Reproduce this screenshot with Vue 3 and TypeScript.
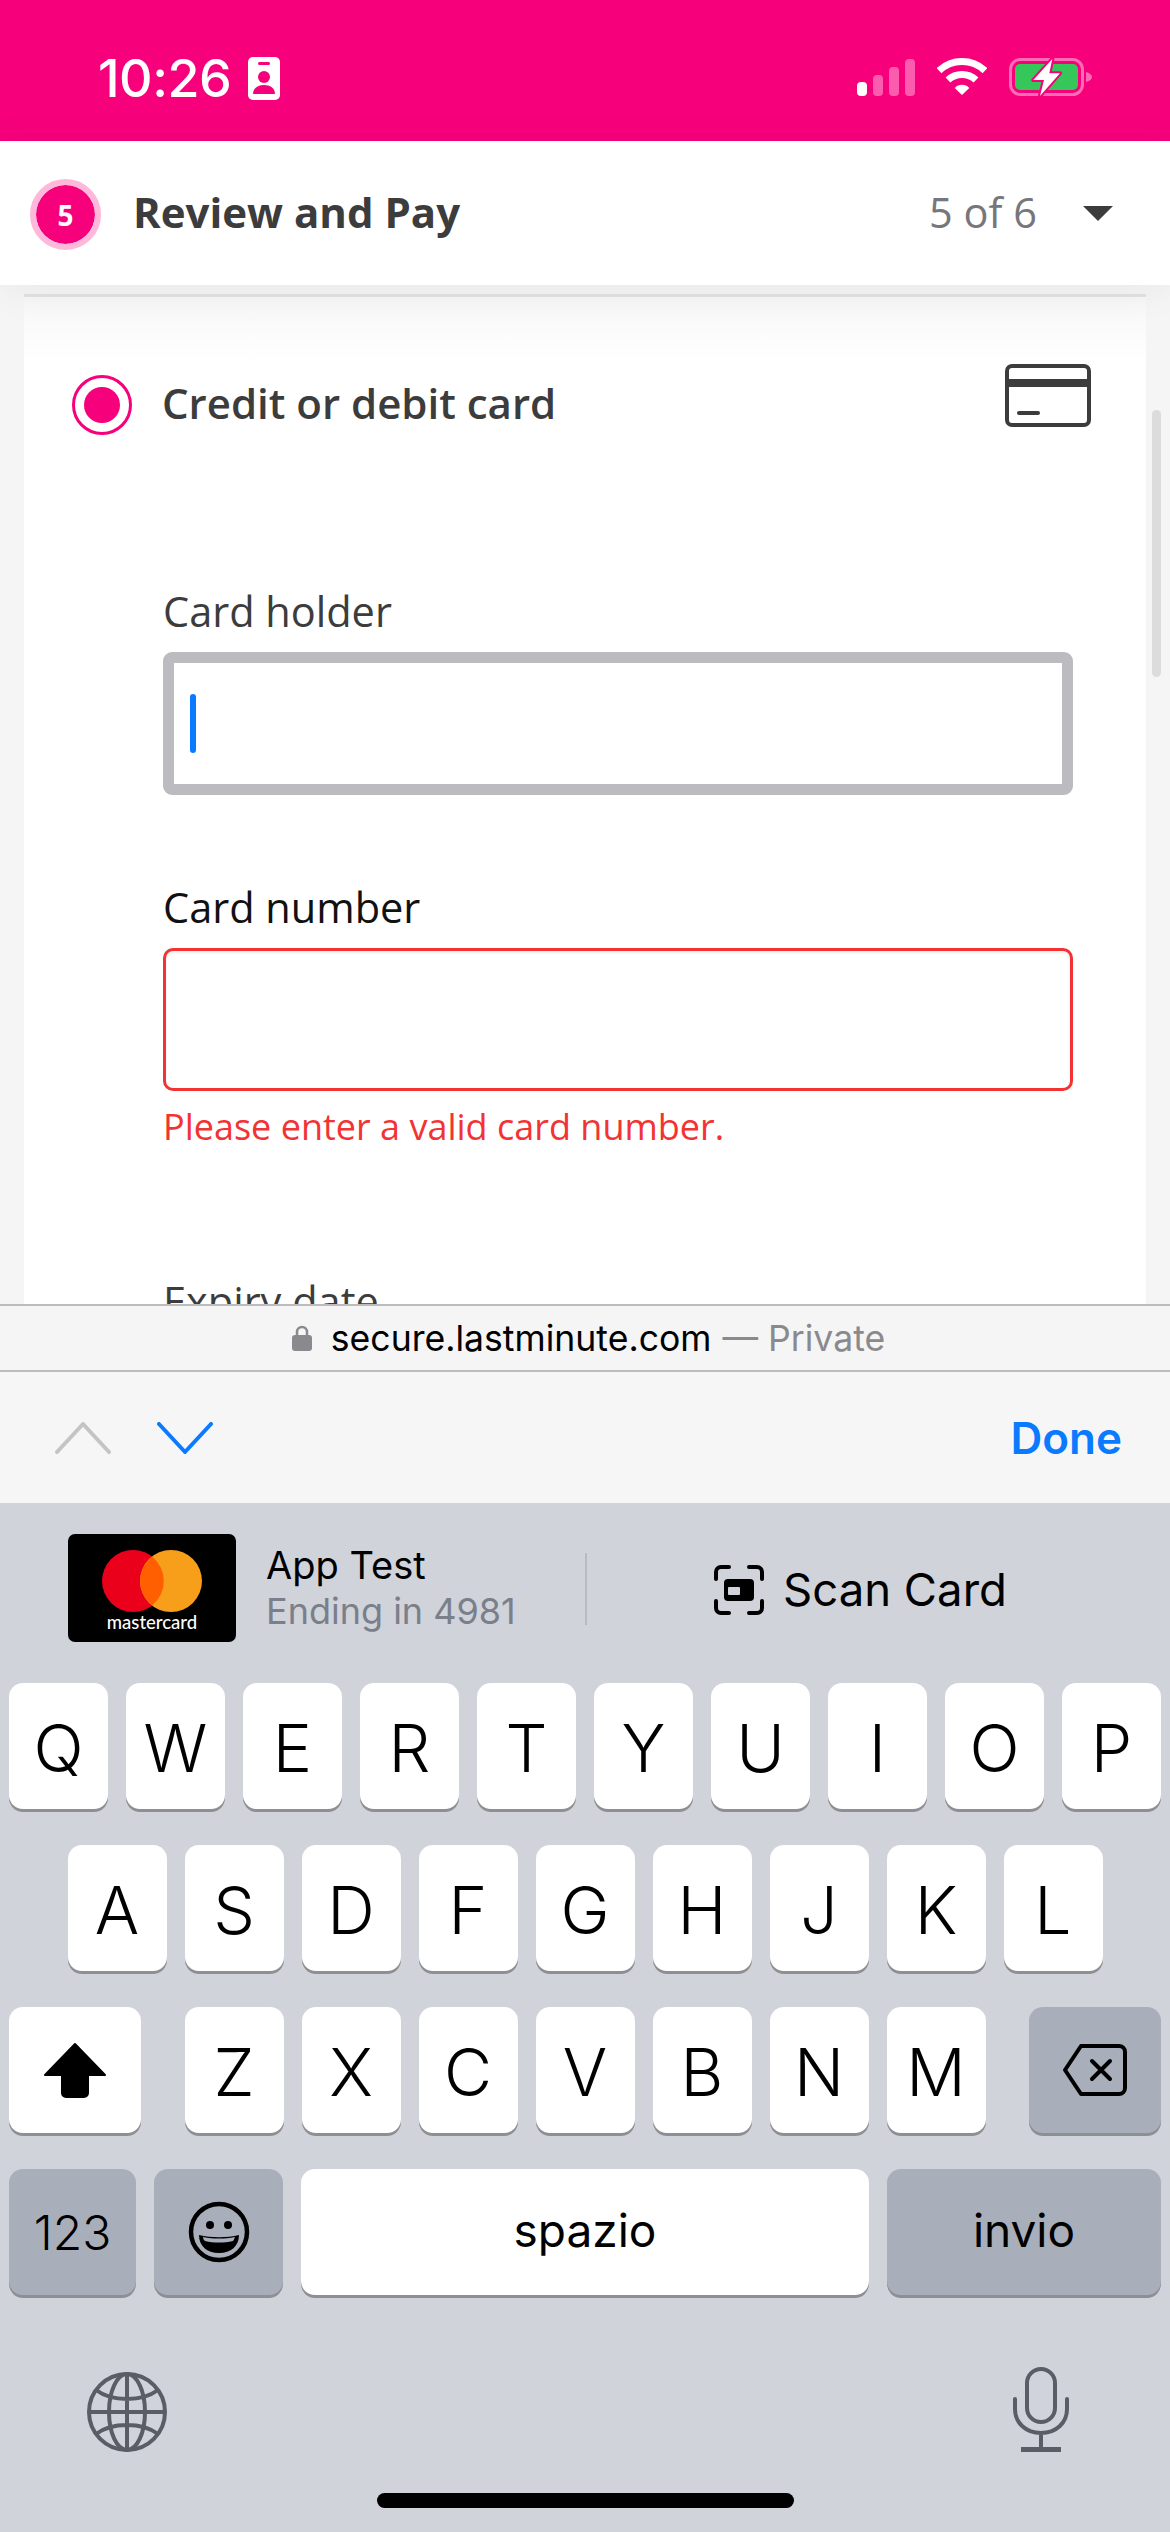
<script setup lang="ts">
const row1: string[] = ['Q', 'W', 'E', 'R', 'T', 'Y', 'U', 'I', 'O', 'P']
const row2: string[] = ['A', 'S', 'D', 'F', 'G', 'H', 'J', 'K', 'L']
const row3: string[] = ['Z', 'X', 'C', 'V', 'B', 'N', 'M']
</script>

<template>
  <div class="screen">
    <header class="status">
      <div class="status-left">
        <span class="time">10:26</span>
        <svg class="id" width="32" height="43" viewBox="0 0 32 43">
          <rect width="32" height="43" rx="5" fill="#fff" />
          <rect x="10" y="5" width="12" height="3" rx="1.5" fill="#f6007c" />
          <circle cx="16" cy="20" r="6" fill="#f6007c" />
          <path d="M5 37c0-6 5-9 11-9s11 3 11 9z" fill="#f6007c" />
        </svg>
      </div>
      <div class="status-right">
        <div class="signal">
          <i class="b1"></i><i class="b2"></i><i class="b3"></i><i class="b4"></i>
        </div>
        <svg width="50" height="37" viewBox="0 0 50 37" fill="none">
          <path d="M2 12.700A33.500 33.500 0 0 1 48 12.700" stroke="#fff" stroke-width="7" />
          <path d="M11 22A20.500 20.500 0 0 1 39 22" stroke="#fff" stroke-width="7" />
          <path d="M25 37 17.700 30A10 10 0 0 1 32.300 30z" fill="#fff" />
        </svg>
        <svg width="83" height="40" viewBox="0 0 83 40" fill="none">
          <rect x="1.500" y="1.500" width="72" height="35" rx="10" stroke="#fb6cb6" stroke-width="3" />
          <rect x="6" y="6" width="63" height="26" rx="5" fill="#35c759" />
          <path d="M77 14c4 1 6 3 6 5s-2 4-6 5z" fill="#fb6cb6" />
          <path d="M43.300 1 24.300 22H35L31 38 51 15.300H40.300z" fill="#fff" stroke="#f6007c" stroke-width="4" stroke-linejoin="round" paint-order="stroke" />
        </svg>
      </div>
    </header>

    <div class="stepbar">
      <div class="step-left">
        <span class="step-dot">5</span>
        <span class="step-title">Review and Pay</span>
      </div>
      <div class="step-right">
        <span class="step-count">5 of 6</span>
        <span class="caret-down"></span>
      </div>
    </div>

    <main class="page">
      <section class="card">
        <div class="method">
          <div class="method-left">
            <span class="radio"><span class="radio-dot"></span></span>
            <span class="method-name">Credit or debit card</span>
          </div>
          <svg width="86" height="63" viewBox="0 0 86 63" fill="none">
            <rect x="2" y="2" width="82" height="59" rx="5" stroke="#3c3c3c" stroke-width="4" />
            <rect x="2" y="15" width="82" height="8" fill="#3c3c3c" />
            <rect x="12" y="47" width="23" height="4" rx="2" fill="#3c3c3c" />
          </svg>
        </div>
        <form class="form">
          <label class="label">Card holder</label>
          <div class="input focus"><span class="text-caret"></span></div>
          <label class="label label-dark second">Card number</label>
          <div class="input error"></div>
          <p class="error-text">Please enter a valid card number.</p>
          <label class="label third">Expiry date</label>
        </form>
      </section>
      <div class="scrollbar"></div>
    </main>

    <div class="urlbar">
      <svg width="20" height="26" viewBox="0 0 20 26" fill="none">
        <path d="M5 12V7a5 5 0 0 1 10 0v5" stroke="#8a8a8e" stroke-width="2.500" />
        <rect y="10" width="20" height="16" rx="3" fill="#8a8a8e" />
      </svg>
      <span class="url">secure.lastminute.com</span>
      <span class="private">— Private</span>
    </div>

    <div class="toolbar">
      <div class="arrows">
        <svg width="56" height="32" viewBox="0 0 56 32" fill="none">
          <path d="M2 30 28 2l26 28" stroke="#c4c4c4" stroke-width="4" stroke-linecap="round" stroke-linejoin="round" />
        </svg>
        <svg width="56" height="32" viewBox="0 0 56 32" fill="none">
          <path d="M2 2l26 28L54 2" stroke="#0a7aff" stroke-width="4" stroke-linecap="round" stroke-linejoin="round" />
        </svg>
      </div>
      <span class="done">Done</span>
    </div>

    <div class="keyboard">
      <div class="autofill">
        <div class="saved">
          <div class="mc">
            <svg width="130" height="66" viewBox="0 0 130 66">
              <circle cx="46" cy="33" r="31" fill="#eb001b" />
              <circle cx="84" cy="33" r="31" fill="#f79e1b" />
              <path d="M65 8.600a31 31 0 0 1 0 48.800 31 31 0 0 1 0-48.800z" fill="#ff5f00" />
            </svg>
            <span class="mc-name">mastercard</span>
          </div>
          <div class="saved-text">
            <span class="saved-name">App Test</span>
            <span class="saved-num">Ending in 4981</span>
          </div>
        </div>
        <div class="divider"></div>
        <div class="scan">
          <svg width="50" height="50" viewBox="0 0 50 50" fill="none">
            <path d="M2 14V7a5 5 0 0 1 5-5h8M35 2h8a5 5 0 0 1 5 5v7M48 36v7a5 5 0 0 1-5 5h-8M15 48H7a5 5 0 0 1-5-5v-7" stroke="#000" stroke-width="4" stroke-linecap="round" />
            <rect x="10" y="14" width="30" height="22" rx="4" fill="#000" />
            <rect x="14" y="22" width="12" height="8" rx="1" fill="#d0d3da" />
          </svg>
          <span class="scan-text">Scan Card</span>
        </div>
      </div>

      <div class="rows">
        <div class="row">
          <span v-for="k in row1" :key="k" class="key">{{ k }}</span>
        </div>
        <div class="row">
          <span v-for="k in row2" :key="k" class="key">{{ k }}</span>
        </div>
        <div class="row between">
          <span class="key wide">
            <svg width="64" height="56" viewBox="0 0 64 56">
              <path d="M32 2 62 33H45v18a4 4 0 0 1-4 4H23a4 4 0 0 1-4-4V33H2z" fill="#000" stroke="#000" stroke-width="2" stroke-linejoin="round" />
            </svg>
          </span>
          <div class="row">
            <span v-for="k in row3" :key="k" class="key">{{ k }}</span>
          </div>
          <span class="key wide dark">
            <svg width="66" height="54" viewBox="0 0 66 54" fill="none">
              <path d="M19 3h38a6 6 0 0 1 6 6v36a6 6 0 0 1-6 6H19L3 27z" stroke="#000" stroke-width="4" stroke-linejoin="round" />
              <path d="M30 18l18 18M48 18 30 36" stroke="#000" stroke-width="4" stroke-linecap="round" />
            </svg>
          </span>
        </div>
        <div class="row">
          <span class="key dark num">123</span>
          <span class="key dark emoji">
            <svg width="62" height="62" viewBox="0 0 62 62" fill="none">
              <circle cx="31" cy="31" r="28" stroke="#000" stroke-width="4.500" />
              <circle cx="22" cy="24" r="4" fill="#000" />
              <circle cx="40" cy="24" r="4" fill="#000" />
              <path d="M11 34c12 3 28 3 40 0 0 11-8 18-20 18s-20-7-20-18z" fill="#000" />
              <path d="M15 36c10 2 22 2 32 0-1 2-1 3-2 4-9 2-19 2-28 0-1-1-2-2-2-4z" fill="#a9afba" />
            </svg>
          </span>
          <span class="key space small">spazio</span>
          <span class="key dark enter small">invio</span>
        </div>
      </div>

      <div class="kb-bottom">
        <svg class="globe" width="80" height="80" viewBox="0 0 80 80" fill="none" stroke="#5a5d66" stroke-width="4">
          <circle cx="40" cy="40" r="38" />
          <ellipse cx="40" cy="40" rx="18" ry="38" />
          <path d="M2 40h76M40 2v76M9 18c16 12 46 12 62 0M9 62c16-12 46-12 62 0" />
        </svg>
        <svg width="58" height="85" viewBox="0 0 58 85" fill="none" stroke="#5a5d66" stroke-width="4">
          <rect x="15" y="2" width="28" height="53" rx="14" />
          <path d="M3 32v10c0 14 11 24 26 24s26-10 26-24V32M29 66v15" stroke-linecap="round" />
          <path d="M9 82.500h40" stroke-width="5" />
        </svg>
      </div>
      <div class="home"></div>
    </div>
  </div>
</template>

<style scoped>
.screen {
  width: 1170px;
  height: 2532px;
  display: flex;
  flex-direction: column;
  overflow: hidden;
  background: #fff;
  font-family: "Open Sans", "Noto Sans", sans-serif;
}

/* status bar */
.status {
  height: 141px;
  flex: none;
  background: #f6007c;
  display: flex;
  justify-content: space-between;
  align-items: flex-start;
  padding: 57px 78px 0 98px;
  box-sizing: border-box;
}
.status-left { display: flex; align-items: center; gap: 17px; }
.time {
  font-family: Inter, sans-serif;
  font-size: 52px;
  font-weight: 500;
  line-height: 43px;
  color: #fff;
  letter-spacing: -0.5px;
}
.status-right { display: flex; align-items: flex-start; gap: 22px; padding-top: 1px; }
.signal { display: flex; align-items: flex-end; gap: 6px; height: 38px; }
.signal i { width: 10px; border-radius: 4px; background: #fb5cae; display: block; }
.signal .b1 { height: 14px; background: #fff; }
.signal .b2 { height: 21px; }
.signal .b3 { height: 29px; }
.signal .b4 { height: 37px; }

/* step bar */
.stepbar {
  height: 144px;
  flex: none;
  background: #fff;
  display: flex;
  align-items: center;
  justify-content: space-between;
  padding: 0 57px 0 30px;
  box-sizing: border-box;
  position: relative;
  z-index: 2;
  box-shadow: 0 4px 40px rgba(0, 0, 0, 0.06);
}
.step-left { display: flex; align-items: center; gap: 32px; }
.step-dot {
  width: 71px;
  height: 71px;
  margin-top: 3px;
  box-sizing: border-box;
  border: 6px solid #fdb8da;
  border-radius: 50%;
  background: #f6007c;
  background-clip: padding-box;
  color: #fff;
  font-size: 28px;
  font-weight: 700;
  display: flex;
  align-items: center;
  justify-content: center;
}
.step-title { font-size: 42px; font-weight: 700; color: #3c3c3c; padding-bottom: 4px; }
.step-right { display: flex; align-items: center; gap: 46px; }
.step-count { font-size: 41.500px; color: #76767c; padding-bottom: 2px; }
.caret-down {
  width: 0;
  height: 0;
  border-left: 15px solid transparent;
  border-right: 15px solid transparent;
  border-top: 15px solid #3c3c3c;
}

/* page */
.page {
  height: 1019px;
  flex: none;
  background: #f5f5f5;
  padding: 9px 24px 0;
  box-sizing: border-box;
  position: relative;
  overflow: hidden;
}
.card {
  background: linear-gradient(#f7f7f7, #fff 66px);
  border-top: 3px solid #e2e2e2;
  height: 1100px;
  padding: 67px 55px 0 48px;
  box-sizing: border-box;
}
.method { display: flex; justify-content: space-between; align-items: flex-start; }
.method-left { display: flex; align-items: center; gap: 30px; margin-top: 10px; }
.radio {
  width: 60px;
  height: 60px;
  box-sizing: border-box;
  border: 3px solid #f6007c;
  border-radius: 50%;
  display: flex;
  align-items: center;
  justify-content: center;
}
.radio-dot { width: 36px; height: 36px; border-radius: 50%; background: #f6007c; }
.method-name { font-size: 42px; font-weight: 600; color: #3c3c3c; padding-bottom: 4px; }
.form { margin: 151px 18px 0 91px; display: flex; flex-direction: column; }
.label { font-size: 41.500px; line-height: 50px; color: #3c3c3c; margin-bottom: 16px; }
.label-dark { color: #111; }
.second { margin-top: 87px; }
.third { margin-top: 127px; }
.input { height: 143px; box-sizing: border-box; background: #fff; }
.input.focus {
  border: 11px solid #bcbcc0;
  border-radius: 9px;
  padding: 31px 0 0 16px;
}
.text-caret { display: block; width: 6px; height: 59px; border-radius: 3px; background: #0a7aff; }
.input.error {
  border: 3px solid #f33333;
  border-radius: 10px;
  box-shadow: inset 0 2px 3px rgba(0, 0, 0, 0.07);
}
.error-text { margin: 14px 0 0; font-size: 36px; line-height: 44px; color: #f33333; }
.scrollbar {
  position: absolute;
  right: 9px;
  top: 125px;
  width: 9px;
  height: 267px;
  border-radius: 5px;
  background: #dcdcdc;
}

/* url bar */
.urlbar {
  height: 68px;
  flex: none;
  box-sizing: border-box;
  border-top: 2px solid #bdbdbd;
  border-bottom: 2px solid #bdbdbd;
  background: #f5f5f5;
  display: flex;
  align-items: center;
  justify-content: center;
  font-family: Inter, sans-serif;
  font-size: 35.600px;
  padding-left: 7px;
}
.url { color: #000; margin-left: 19px; }
.private { color: #8a8a8e; margin-left: 11px; }

/* toolbar */
.toolbar {
  height: 131px;
  flex: none;
  background: #f6f6f6;
  display: flex;
  align-items: center;
  justify-content: space-between;
  padding: 0 48px 0 55px;
  box-sizing: border-box;
}
.arrows { display: flex; gap: 46px; }
.done { font-family: Inter, sans-serif; font-size: 44px; font-weight: 600; color: #0a7aff; }

/* keyboard */
.keyboard {
  flex: 1;
  background: #d0d3da;
  font-family: Inter, sans-serif;
  color: #000;
  display: flex;
  flex-direction: column;
}
.autofill { height: 180px; flex: none; display: flex; align-items: flex-start; padding: 31px 0 0 68px; box-sizing: border-box; }
.saved { display: flex; gap: 30px; width: 517px; }
.mc {
  width: 168px;
  height: 108px;
  background: #000;
  border-radius: 7px;
  display: flex;
  flex-direction: column;
  align-items: center;
  padding-top: 14px;
  box-sizing: border-box;
}
.mc-name { color: #fff; font-family: Lato, sans-serif; font-size: 18.500px; line-height: 22px; margin-top: -3px; font-weight: 500; }
.saved-text { display: flex; flex-direction: column; padding-top: 7px; }
.saved-name { font-size: 38px; line-height: 48px; }
.saved-num { font-size: 36px; line-height: 48px; margin-top: -2px; color: #7a7f8a; }
.divider { width: 2px; height: 72px; background: #b8bbc2; margin-top: 19px; }
.scan { display: flex; align-items: center; gap: 19px; margin: 31px 0 0 127px; }
.scan-text { font-size: 45.500px; line-height: 50px; }
.rows { display: flex; flex-direction: column; gap: 36px; padding: 0 9px; }
.row { display: flex; gap: 18px; justify-content: center; }
.row.between { justify-content: space-between; }
.key {
  width: 99px;
  height: 126px;
  background: #fff;
  border-radius: 14px;
  box-shadow: 0 3px 0 #8e8f94;
  display: flex;
  align-items: center;
  justify-content: center;
  font-size: 66px;
  font-weight: 300;
  flex: none;
  padding-top: 3px;
  box-sizing: border-box;
}
.key.wide { width: 132px; padding-top: 0; }
.key.dark { background: #a9afba; }
.key.small { font-size: 46px; font-weight: 400; padding: 0 0 4px; }
.key.num { width: 127px; font-size: 48px; padding-top: 0; }
.key.emoji { width: 129px; padding-top: 0; }
.key.space { width: 568px; }
.key.enter { width: 274px; }
.kb-bottom { display: flex; justify-content: space-between; align-items: flex-start; padding: 72px 100px 0 87px; height: 156px; flex: none; box-sizing: content-box; }
.globe { margin-top: 5px; }
.home { width: 417px; height: 15px; border-radius: 7.500px; background: #000; margin: -30px auto 0; flex: none; }
</style>
